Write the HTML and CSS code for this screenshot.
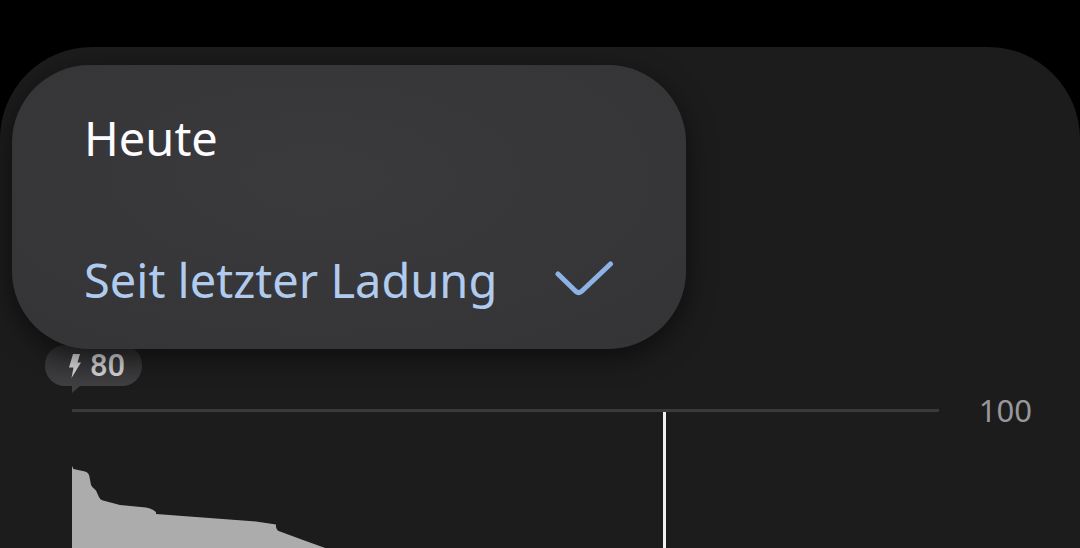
FILE: index.html
```html
<!DOCTYPE html>
<html lang="de">
<head>
<meta charset="utf-8">
<meta name="viewport" content="width=device-width, initial-scale=1">
<title>Akku</title>
<link rel="stylesheet" href="styles.css">
</head>
<body>
<main class="panel">
  <div class="menu" role="menu">
    <button class="menu-item" type="button" role="menuitemradio" aria-checked="false">Heute</button>
    <button class="menu-item selected" type="button" role="menuitemradio" aria-checked="true">
      Seit letzter Ladung
      <svg class="check" viewBox="0 0 60 40" aria-hidden="true"><path d="M4 14 22 31.500Q25 34 28 31L56.500 4"/></svg>
    </button>
  </div>
  <section class="chart">
    <div class="badge">
      <svg class="bolt" viewBox="0 0 14 26" aria-hidden="true"><path d="M5 1h7L9.500 9.500H13L3.500 25 5.500 14.500H1z"/></svg>
      <span>80</span>
    </div>
    <div class="graph">
      <div class="plot">
        <svg class="area" viewBox="0 0 867 136" preserveAspectRatio="xMinYMin slice" aria-hidden="true">
          <path d="M0 54 1.500 57 13 59.500Q17 60.500 17.500 65L19 73Q20 75 24 78.500L26 83Q28 88 31 88.500L48 93 74 95.500Q81 97 84 100V102L184 109.500 204 112.500V115Q205 119 208 119.500L231 128 256 137H0z"/>
        </svg>
        <div class="cursor"></div>
      </div>
      <span class="axis-label">100</span>
    </div>
  </section>
</main>
</body>
</html>
```
FILE: styles.css
```css
* { box-sizing: border-box; }

body {
  margin: 0;
  min-height: 100vh;
  padding-top: 47px;
  display: flex;
  background: #000;
  font-family: "Noto Sans", sans-serif;
}

.panel {
  position: relative;
  flex: 1;
  padding: 298px 48px 0 45px;
  border-radius: 92px 92px 0 0;
  background: #1c1c1c;
}

.menu {
  position: absolute;
  z-index: 1;
  top: 18px;
  left: 12px;
  width: 674px;
  max-width: calc(100% - 24px);
  border-radius: 78px;
  overflow: hidden;
  background: radial-gradient(ellipse at 45% 40%, #3a3a3c, #343436);
  box-shadow: 0 8px 28px rgba(0, 0, 0, 0.55);
}

.menu-item {
  display: flex;
  align-items: center;
  justify-content: space-between;
  width: 100%;
  height: 142px;
  padding: 4px 72px 0;
  border: 0;
  background: none;
  color: #fcfcff;
  font: 400 47px/64px "Noto Sans", sans-serif;
  text-align: left;
}

.selected { color: #b1cbee; }

.check {
  width: 60px;
  height: 40px;
  fill: none;
  stroke: #8db2e4;
  stroke-width: 5;
  stroke-linecap: round;
  stroke-linejoin: round;
}

.badge {
  position: relative;
  display: flex;
  align-items: center;
  gap: 8px;
  width: 97px;
  height: 41px;
  padding-left: 23px;
  border-radius: 20px;
  background: linear-gradient(#2d2d2f, #404042);
  color: #d2d2d4;
  font: 500 31px/41px Roboto, sans-serif;
}

.badge::after {
  content: "";
  position: absolute;
  top: 100%;
  left: 27px;
  width: 8px;
  height: 7px;
  background: #404042;
  clip-path: polygon(0 0, 100% 0, 0 100%);
}

.bolt {
  width: 14px;
  height: 26px;
  fill: #d2d2d4;
}

.graph {
  display: flex;
  gap: 40px;
  margin-top: 23px;
  padding-left: 27px;
}

.plot {
  position: relative;
  flex: 1;
  height: 139px;
  border-top: 3px solid #3a3a3b;
}

.area {
  display: block;
  width: 100%;
  height: 136px;
  fill: #acacac;
}

.cursor {
  position: absolute;
  top: 0;
  bottom: 0;
  left: 68.2%;
  width: 3px;
  background: #f0f0f0;
}

.axis-label {
  height: 40px;
  margin-top: -19px;
  color: #98989b;
  font-size: 31px;
  line-height: 40px;
}
```
